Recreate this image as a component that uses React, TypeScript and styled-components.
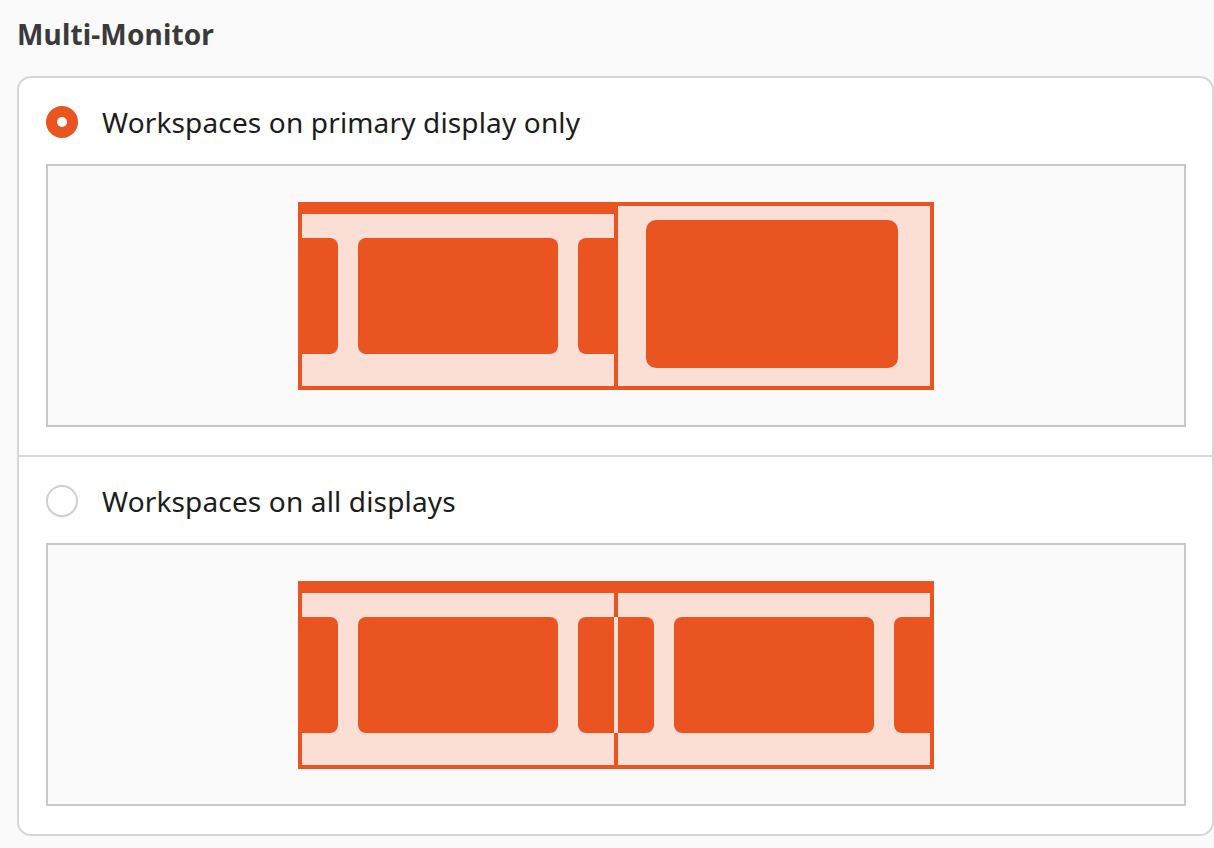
import * as React from 'react'
import styled, { createGlobalStyle } from 'styled-components'

const ORANGE = '#e95420'
const PINK = '#fbdfd4'

const GlobalStyle = createGlobalStyle`
  html, body {
    margin: 0;
    padding: 0;
    background: #fafafa;
  }
  body {
    font-family: 'Noto Sans', 'Open Sans', sans-serif;
    -webkit-font-smoothing: antialiased;
  }
`

const Page = styled.div`
  padding: 17px 0 0 17px;
`

const Heading = styled.h2`
  margin: 0 0 25px 0;
  font-size: 28px;
  line-height: 34px;
  font-weight: 700;
  letter-spacing: 0.15px;
  color: #3a3a3a;
`

const Card = styled.div`
  width: 1197px;
  box-sizing: border-box;
  background: #ffffff;
  border: 2px solid #d6d6d6;
  border-radius: 14px;
  overflow: hidden;
`

const Row = styled.div`
  display: flex;
  flex-direction: column;
  gap: 26px;
  padding: 28px 26px 28px 27px;

  & + & {
    border-top: 2px solid #d8d8d8;
  }
`

const Option = styled.label`
  display: flex;
  align-items: center;
  gap: 24px;
  height: 32px;
  cursor: pointer;
`

const Radio = styled.span<{ $checked: boolean }>`
  position: relative;
  width: 32px;
  height: 32px;
  box-sizing: border-box;
  border-radius: 50%;
  flex: none;
  background: ${(p) => (p.$checked ? ORANGE : '#ffffff')};
  border: ${(p) => (p.$checked ? 'none' : '2px solid #cfcfcf')};
  box-shadow: ${(p) => (p.$checked ? 'none' : '0 1px 1px rgba(0,0,0,0.05)')};

  &::after {
    content: '';
    display: ${(p) => (p.$checked ? 'block' : 'none')};
    position: absolute;
    left: 11px;
    top: 11px;
    width: 10px;
    height: 10px;
    border-radius: 50%;
    background: #ffffff;
  }
`

const OptionLabel = styled.span`
  font-size: 28px;
  line-height: 32px;
  letter-spacing: 0.15px;
  color: #1c1c1c;
`

const PreviewBox = styled.div`
  height: 263px;
  box-sizing: border-box;
  border: 2px solid #c9c9c9;
  background: #fafafa;
  display: flex;
  align-items: center;
  justify-content: center;
`

type Mode = 'primary' | 'all'

function Thumbs({ xs, clip }: { xs: number[]; clip: string }) {
  return (
    <g clipPath={`url(#${clip})`}>
      {xs.map((x) => (
        <rect key={x} x={x} y={36} width={200} height={116} rx={8} fill={ORANGE} />
      ))}
    </g>
  )
}

function MonitorArt({ mode }: { mode: Mode }) {
  const id = React.useId().replace(/:/g, '')
  const left = `l${id}`
  const right = `r${id}`

  return (
    <svg width="636" height="188" viewBox="0 0 636 188">
      <defs>
        <clipPath id={left}>
          <rect x={4} y={12} width={312} height={172} />
        </clipPath>
        <clipPath id={right}>
          <rect x={320} y={12} width={312} height={172} />
        </clipPath>
      </defs>
      <rect width={636} height={188} fill={ORANGE} />
      <rect x={4} y={12} width={312} height={172} fill={PINK} />
      <Thumbs xs={[-160, 60, 280]} clip={left} />

      {mode === 'primary' ? (
        <>
          <rect x={320} y={4} width={312} height={180} fill={PINK} />
          <rect x={348} y={18} width={252} height={148} rx={10} fill={ORANGE} />
        </>
      ) : (
        <>
          <rect x={320} y={12} width={312} height={172} fill={PINK} />
          <Thumbs xs={[156, 376, 596]} clip={right} />
          <rect x={316} y={36} width={4} height={116} fill={PINK} />
        </>
      )}
    </svg>
  )
}

const options: { mode: Mode; label: string }[] = [
  { mode: 'primary', label: 'Workspaces on primary display only' },
  { mode: 'all', label: 'Workspaces on all displays' },
]

export default function App() {
  const [selected, setSelected] = React.useState<Mode>('primary')

  return (
    <Page>
      <GlobalStyle />
      <Heading>Multi-Monitor</Heading>
      <Card>
        {options.map((o) => (
          <Row key={o.mode}>
            <Option onClick={() => setSelected(o.mode)}>
              <Radio $checked={selected === o.mode} />
              <OptionLabel>{o.label}</OptionLabel>
            </Option>
            <PreviewBox>
              <MonitorArt mode={o.mode} />
            </PreviewBox>
          </Row>
        ))}
      </Card>
    </Page>
  )
}
